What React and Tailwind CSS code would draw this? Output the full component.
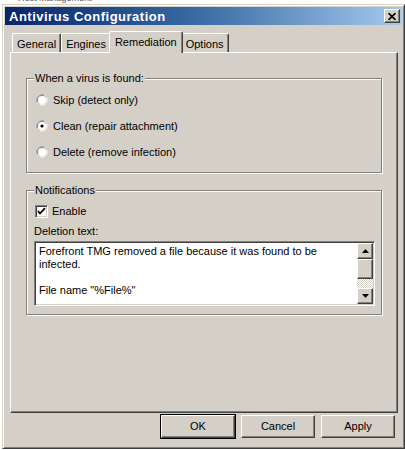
import React from "react";

const TABS = ["General", "Engines", "Remediation", "Options"];

const RADIOS = [
  { label: "Skip (detect only)", checked: false },
  { label: "Clean (repair attachment)", checked: true },
  { label: "Delete (remove infection)", checked: false },
];

// classic raised 3D edge
const raised =
  "border border-t-white border-l-white border-r-[#404040] border-b-[#404040] shadow-[inset_-1px_-1px_0_#808080,inset_1px_1px_0_#d4d0c8]";
// sunken edge (fields)
const sunken =
  "border border-t-[#808080] border-l-[#808080] border-r-white border-b-white shadow-[inset_1px_1px_0_#404040,inset_-1px_-1px_0_#d4d0c8]";

const Radio = ({ checked }) => (
  <svg width="12" height="12" viewBox="0 0 12 12" className="shrink-0">
    <path d="M8 1.1 A5.5 5.5 0 0 0 1.1 8" stroke="#808080" fill="none" />
    <path d="M7.5 2.2 A4.5 4.5 0 0 0 2.2 7.5" stroke="#404040" fill="none" />
    <circle cx="6" cy="6" r="4" fill="#fff" />
    <path d="M10.9 4 A5.5 5.5 0 0 1 4 10.9" stroke="#fff" fill="none" />
    {checked && <circle cx="6" cy="6" r="1.6" fill="#000" />}
  </svg>
);

const Checkbox = () => (
  <div className={`w-[13px] h-[13px] bg-white ${sunken} flex items-center justify-center`}>
    <svg width="9" height="9" viewBox="0 0 9 9">
      <path d="M1 4 L3 6.5 L8 1.2" stroke="#000" strokeWidth="1.8" fill="none" />
    </svg>
  </div>
);

const Group = ({ legend, className, children }) => (
  <div
    className={`relative border border-[#808080] shadow-[1px_1px_0_#fff,inset_1px_1px_0_#fff] ${className}`}
  >
    <span className="absolute -top-[8px] left-[7px] bg-[#d4d0c8] px-[1px] leading-[14px]">
      {legend}
    </span>
    {children}
  </div>
);

const ScrollArrow = ({ up }) => (
  <div className={`w-[16px] h-[16px] bg-[#d4d0c8] ${raised} flex items-center justify-center`}>
    <svg width="7" height="4" viewBox="0 0 7 4">
      <path d={up ? "M3.5 0 L7 4 L0 4 Z" : "M0 0 L7 0 L3.5 4 Z"} fill="#000" />
    </svg>
  </div>
);

const Button = ({ label, isDefault }) => (
  <div
    className={`w-[74px] h-[23px] ${isDefault ? "outline outline-1 outline-black" : ""} bg-[#d4d0c8] ${raised} flex items-center justify-center`}
  >
    {label}
  </div>
);

export default function App() {
  return (
    <div className="w-[405px] h-[450px] bg-white overflow-hidden text-[11px] text-black font-['Liberation_Sans',Arial,sans-serif]">
      {/* window behind, mostly hidden */}
      <div className="h-[4px] overflow-hidden relative">
        <span className="absolute left-[18px] -top-[6px] text-[9px] leading-[9px] text-[#555]">
          Host Management
        </span>
      </div>

      <div className="ml-[2px] w-[403px] h-[445px] bg-[#d4d0c8] border border-t-[#d4d0c8] border-l-[#d4d0c8] border-r-[#404040] border-b-[#404040] shadow-[inset_1px_1px_0_#fff,inset_-1px_-1px_0_#808080] p-[2px] flex flex-col">
        {/* title bar */}
        <div className="h-[18px] bg-gradient-to-r from-[#0a246a] via-[#3a6ea5] to-[#a6caf0] flex items-center justify-between pl-[4px] pr-[2px]">
          <span className="text-white font-bold text-[13px] tracking-[0.5px] leading-none">
            Antivirus Configuration
          </span>
          <div className={`w-[16px] h-[14px] bg-[#d4d0c8] ${raised} flex items-center justify-center`}>
            <svg width="8" height="7" viewBox="0 0 8 7">
              <path d="M0.5 0 L7.5 7 M7.5 0 L0.5 7" stroke="#000" strokeWidth="1.6" />
            </svg>
          </div>
        </div>

        {/* tabs */}
        <div className="mt-[5px] ml-[5px] mr-[4px] flex flex-col">
          <div className="flex items-end h-[22px] pl-[2px] relative z-10">
            {TABS.map((t) =>
              t === "Remediation" ? (
                <div
                  key={t}
                  className="h-[22px] -mx-[2px] mb-[-1px] px-[5px] pt-[2px] bg-[#d4d0c8] border border-b-0 border-t-white border-l-white border-r-[#404040] shadow-[inset_-1px_0_0_#808080] rounded-t-[2px] relative"
                >
                  {t}
                </div>
              ) : (
                <div
                  key={t}
                  className="h-[19px] px-[4px] pt-[2px] border border-b-0 border-t-white border-l-white border-r-[#404040] shadow-[inset_-1px_0_0_#808080] rounded-t-[2px]"
                >
                  {t}
                </div>
              )
            )}
          </div>

          <div className={`h-[361px] ${raised} border-t-white px-[15px] pt-[25px]`}>
            <Group legend="When a virus is found:" className="h-[95px] pt-[15px] pl-[9px]">
              <div className="flex flex-col gap-[14px]">
                {RADIOS.map((r) => (
                  <div key={r.label} className="flex items-center gap-[5px] h-[12px]">
                    <Radio checked={r.checked} />
                    <span>{r.label}</span>
                  </div>
                ))}
              </div>
            </Group>

            <Group legend="Notifications" className="mt-[17px] h-[125px] pl-[7px] pr-[6px] pt-[12px]">
              <div className="flex items-center gap-[4px] ml-[1px]">
                <Checkbox />
                <span>Enable</span>
              </div>
              <div className="mt-[5px] leading-[13px]">Deletion text:</div>
              <div className={`mt-[3px] h-[65px] bg-white ${sunken} flex`}>
                <div className="flex-1 pl-[4px] pt-[3px] leading-[13px]">
                  Forefront TMG removed a file because it was found to be
                  <br />
                  infected.
                  <br />
                  <br />
                  File name "%File%"
                </div>
                <div className="w-[16px] flex flex-col mt-[1px] mb-[1px] mr-[1px]">
                  <ScrollArrow up />
                  <div className={`h-[20px] bg-[#d4d0c8] ${raised}`} />
                  <div className="flex-1 bg-[repeating-conic-gradient(#fff_0_25%,#d4d0c8_0_50%)] bg-[length:2px_2px]" />
                  <ScrollArrow />
                </div>
              </div>
            </Group>
          </div>
        </div>

        {/* buttons */}
        <div className="mt-[2px] flex justify-end gap-[6px] pr-[7px]">
          <Button label="OK" isDefault />
          <Button label="Cancel" />
          <Button label="Apply" />
        </div>
      </div>
    </div>
  );
}
